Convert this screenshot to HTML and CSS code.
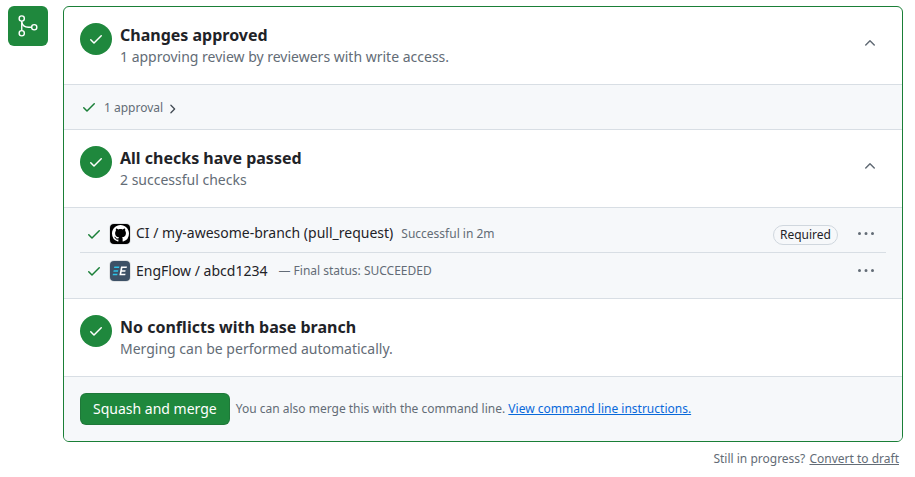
FILE: index.html
```html
<!DOCTYPE html>
<html lang="en">
<head>
    <meta charset="UTF-8">
    <title>Merge box</title>
    <link rel="stylesheet" href="styles.css">
</head>
<body>
<svg class="defs" width="0" height="0">
    <symbol id="check" viewBox="0 0 16 16"><path d="M13.78 4.22a.75.75 0 0 1 0 1.06l-7.25 7.25a.75.75 0 0 1-1.06 0L2.22 9.28a.751.751 0 0 1 .018-1.042.751.751 0 0 1 1.042-.018L6 10.94l6.72-6.72a.75.75 0 0 1 1.06 0Z"/></symbol>
    <symbol id="chevron-up" viewBox="0 0 16 16"><path d="M3.22 10.53a.749.749 0 0 1 0-1.06l4.25-4.25a.749.749 0 0 1 1.06 0l4.25 4.25a.749.749 0 0 1-1.06 1.06L8 6.811 4.28 10.53a.749.749 0 0 1-1.06 0Z"/></symbol>
    <symbol id="chevron-right" viewBox="0 0 16 16"><path d="M6.22 3.22a.75.75 0 0 1 1.06 0l4.25 4.25a.75.75 0 0 1 0 1.06l-4.25 4.25a.751.751 0 0 1-1.042-.018.751.751 0 0 1-.018-1.042L9.94 8 6.22 4.28a.75.75 0 0 1 0-1.06Z"/></symbol>
    <symbol id="kebab" viewBox="0 0 16 16"><path d="M8 9a1.5 1.5 0 1 0 0-3 1.5 1.5 0 0 0 0 3ZM1.5 9a1.5 1.5 0 1 0 0-3 1.5 1.5 0 0 0 0 3Zm13 0a1.5 1.5 0 1 0 0-3 1.5 1.5 0 0 0 0 3Z"/></symbol>
</svg>

<div class="layout">
    <div class="merge_icon">
        <svg class="merge_glyph" width="24" height="24" viewBox="0 0 24 24">
            <circle cx="5.75" cy="4.5" r="2.6"/>
            <circle cx="5.75" cy="19.25" r="2.6"/>
            <circle cx="18.25" cy="13.25" r="2.6"/>
            <path d="M5.75 7.1v9.55M5.75 7.6c.5 3.3 3.2 5.65 6.6 5.65h3.3"/>
        </svg>
    </div>

    <div class="main">
        <div class="box">
            <section class="head">
                <span class="circle"><svg width="16" height="16"><use href="#check"/></svg></span>
                <div class="head_text">
                    <h3>Changes approved</h3>
                    <p>1 approving review by reviewers with write access.</p>
                </div>
                <svg class="toggle" width="16" height="16"><use href="#chevron-up"/></svg>
            </section>

            <section class="approvals">
                <svg class="tick" width="16" height="16"><use href="#check"/></svg>
                <span>1 approval</span>
                <svg class="more" width="14" height="14"><use href="#chevron-right"/></svg>
            </section>

            <section class="head">
                <span class="circle"><svg width="16" height="16"><use href="#check"/></svg></span>
                <div class="head_text">
                    <h3>All checks have passed</h3>
                    <p>2 successful checks</p>
                </div>
                <svg class="toggle" width="16" height="16"><use href="#chevron-up"/></svg>
            </section>

            <section class="checks">
                <div class="check_row">
                    <svg class="tick" width="16" height="16"><use href="#check"/></svg>
                    <span class="avatar avatar_gh">
                        <svg width="17" height="17" viewBox="0 0 16 16"><path d="M8 0c4.42 0 8 3.58 8 8a8.013 8.013 0 0 1-5.45 7.59c-.4.08-.55-.17-.55-.38 0-.27.01-1.13.01-2.2 0-.75-.25-1.23-.54-1.48 1.78-.2 3.65-.88 3.65-3.95 0-.88-.31-1.59-.82-2.15.08-.2.36-1.02-.08-2.12 0 0-.67-.22-2.2.82-.64-.18-1.32-.27-2-.27-.68 0-1.36.09-2 .27-1.53-1.03-2.2-.82-2.2-.82-.44 1.1-.16 1.92-.08 2.12-.51.56-.82 1.28-.82 2.15 0 3.06 1.86 3.75 3.64 3.95-.23.2-.44.55-.51 1.07-.46.21-1.61.55-2.33-.66-.15-.24-.6-.83-1.23-.82-.67.01-.27.38.01.53.34.19.73.9.82 1.13.16.45.68 1.31 2.69.94 0 .67.01 1.3.01 1.49 0 .21-.15.45-.55.38A7.995 7.995 0 0 1 0 8c0-4.42 3.58-8 8-8Z"/></svg>
                    </span>
                    <span class="check_name">CI / my-awesome-branch (pull_request)</span>
                    <span class="check_status">Successful in 2m</span>
                    <span class="required">Required</span>
                    <svg class="kebab" width="16" height="16"><use href="#kebab"/></svg>
                </div>
                <div class="check_row">
                    <svg class="tick" width="16" height="16"><use href="#check"/></svg>
                    <span class="avatar avatar_ef">
                        <svg width="20" height="20" viewBox="0 0 20 20">
                            <path class="ef_blue" d="M4.4 5.6h5l-.4 1.5H4ZM3.7 9.2h4.6l-.4 1.5H3.3ZM3 12.8h4.6l-.4 1.5H2.6Z"/>
                            <path class="ef_white" d="M11 5.6h6l-.4 1.5h-4.2l-.4 2.1h3.6l-.3 1.5h-3.6l-.4 2.1h4.3l-.4 1.5H9.4Z"/>
                        </svg>
                    </span>
                    <span class="check_name">EngFlow / abcd1234</span>
                    <span class="check_status check_dash">— Final status: SUCCEEDED</span>
                    <svg class="kebab" width="16" height="16"><use href="#kebab"/></svg>
                </div>
            </section>

            <section class="head">
                <span class="circle"><svg width="16" height="16"><use href="#check"/></svg></span>
                <div class="head_text">
                    <h3>No conflicts with base branch</h3>
                    <p>Merging can be performed automatically.</p>
                </div>
            </section>

            <section class="actions">
                <button class="merge_btn">Squash and merge</button>
                <span class="hint">You can also merge this with the command line. <a href="#">View command line instructions.</a></span>
            </section>
        </div>

        <p class="draft">Still in progress? <a href="#">Convert to draft</a></p>
    </div>
</div>
</body>
</html>
```

FILE: styles.css
```css
* {
    box-sizing: border-box;
}

body {
    margin: 0;
    background: #ffffff;
    color: #1f2328;
    font-family: "Noto Sans", sans-serif;
    font-size: 14px;
    overflow: hidden;
}

svg {
    fill: currentColor;
    display: block;
    flex: none;
}

.defs {
    position: absolute;
}

.layout {
    display: flex;
    gap: 15px;
    padding: 6px 12px 0 8px;
}

.merge_icon {
    width: 40px;
    height: 40px;
    flex: none;
    background: #1f883d;
    border-radius: 6px;
    color: #ffffff;
    display: flex;
    align-items: center;
    justify-content: center;
}

.merge_glyph {
    fill: none;
    stroke: currentColor;
    stroke-width: 1.4;
}

.main {
    flex: 1;
    min-width: 0;
}

.box {
    border: 1px solid #1a7f37;
    border-radius: 6px;
    overflow: hidden;
}

.head {
    height: 78px;
    padding: 16px 16px 0;
    display: flex;
    align-items: flex-start;
    gap: 8px;
    border-bottom: 1px solid #d8dee4;
}

.circle {
    width: 32px;
    height: 32px;
    flex: none;
    border-radius: 50%;
    background: #1f883d;
    color: #ffffff;
    display: flex;
    align-items: center;
    justify-content: center;
}

.head_text {
    flex: 1;
}

.head_text h3 {
    margin: 0;
    font-size: 16px;
    font-weight: 700;
    line-height: 24px;
}

.head_text p {
    margin: 0;
    color: #636c76;
    line-height: 20px;
}

.toggle {
    color: #636c76;
    margin: 12px 8px 0 0;
}

.approvals {
    height: 45px;
    padding: 0 17px;
    display: flex;
    align-items: center;
    background: #f6f8fa;
    border-bottom: 1px solid #d8dee4;
    color: #636c76;
    font-size: 12px;
}

.tick {
    color: #1a7f37;
}

.approvals span {
    margin-left: 7px;
}

.more {
    margin: 3px 0 0 2px;
    color: #424a53;
}

.checks {
    height: 91px;
    padding: 7px 16px 0;
    background: #f6f8fa;
    border-bottom: 1px solid #d8dee4;
}

.check_row {
    height: 37px;
    display: flex;
    align-items: center;
    padding: 0 12px 0 6px;
}

.check_row + .check_row {
    border-top: 1px solid #d8dee4;
}

.avatar {
    width: 20px;
    height: 20px;
    flex: none;
    margin-left: 8px;
    border-radius: 4px;
    box-shadow: 0 0 0 1px rgba(31, 35, 40, 0.1);
    display: flex;
    align-items: center;
    justify-content: center;
}

.avatar_gh {
    background: #000000;
    color: #ffffff;
}

.avatar_ef {
    background: #3d5166;
}

.ef_blue {
    fill: #2ec4e8;
}

.ef_white {
    fill: #ffffff;
}

.check_name {
    margin-left: 6px;
    padding-bottom: 2px;
}

.check_status {
    margin-left: 8px;
    color: #636c76;
    font-size: 12px;
}

.check_dash {
    margin-left: 11px;
    padding-bottom: 2px;
}

.required {
    margin: 3px 20px 0 auto;
    height: 20px;
    padding: 0 6px;
    border: 1px solid #d0d7de;
    border-radius: 10px;
    font-size: 12px;
    line-height: 18px;
    color: #1f2328;
}

.kebab {
    color: #636c76;
}

.check_row .check_dash ~ .kebab {
    margin-left: auto;
}

.actions {
    height: 64px;
    padding: 0 16px;
    display: flex;
    align-items: center;
    gap: 6px;
    background: #f6f8fa;
}

.merge_btn {
    height: 32px;
    padding: 0 12px 2px;
    background: #1f883d;
    color: #ffffff;
    border: 1px solid rgba(31, 35, 40, 0.15);
    border-radius: 6px;
    font-family: inherit;
    font-size: 14px;
    font-weight: 400;
}

.hint {
    padding-bottom: 2px;
    color: #636c76;
    font-size: 12px;
}

.hint a {
    color: #0969da;
}

.draft {
    margin: 8px 4px 0 0;
    text-align: right;
    color: #636c76;
    font-size: 12px;
    line-height: 18px;
}

.draft a {
    margin-left: 1px;
    color: #636c76;
}
```
